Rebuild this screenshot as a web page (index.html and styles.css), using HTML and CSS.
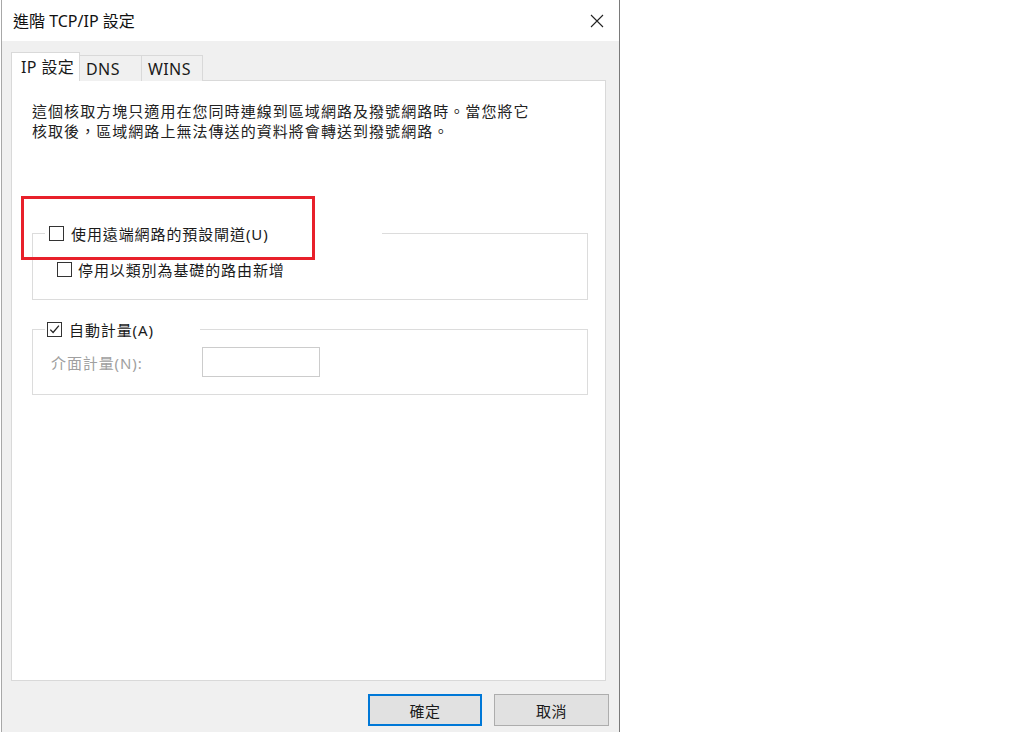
FILE: index.html
```html
<!DOCTYPE html>
<html lang="zh-Hant">
<head>
<meta charset="utf-8">
<title>進階 TCP/IP 設定</title>
<link rel="stylesheet" href="styles.css">
</head>
<body>
<div class="dialog">
  <div class="titlebar">
    <span class="title">進階 TCP/IP 設定</span>
    <svg class="close" width="14" height="14" viewBox="0 0 14 14"><path d="M1 1 L13 13 M13 1 L1 13" stroke="#222" stroke-width="1.1" fill="none"/></svg>
  </div>
  <div class="body">
    <div class="tabs">
      <div class="tab active">IP 設定</div>
      <div class="tab">DNS</div>
      <div class="tab">WINS</div>
    </div>
    <div class="panel">
      <p class="desc">這個核取方塊只適用在您同時連線到區域網路及撥號網路時。當您將它<br>核取後，區域網路上無法傳送的資料將會轉送到撥號網路。</p>
      <div class="group g1">
        <div class="group-title t1"><span class="cb"></span><span>使用遠端網路的預設閘道(U)</span></div>
        <div class="row r1"><span class="cb"></span><span>停用以類別為基礎的路由新增</span></div>
      </div>
      <div class="group g2">
        <div class="group-title t2"><span class="cb checked"><svg width="11" height="11" viewBox="0 0 11 11"><path d="M1.3 5.6 L4.1 8.5 L9.9 1.6" stroke="#222" stroke-width="1.3" fill="none"/></svg></span><span>自動計量(A)</span></div>
        <div class="row r2"><span class="disabled">介面計量(N):</span><span class="input"></span></div>
      </div>
      <div class="highlight"></div>
    </div>
    <div class="buttons">
      <button class="btn default">確定</button>
      <button class="btn">取消</button>
    </div>
  </div>
</div>
</body>
</html>
```
FILE: styles.css
```css
* { box-sizing: border-box; }
html, body { margin: 0; padding: 0; background: #ffffff; }
body {
  font-family: "Noto Sans", "Noto Sans CJK TC", sans-serif;
  color: #1a1a1a;
  height: 732px;
  overflow: hidden;
}
.dialog {
  width: 619px;
  height: 732px;
  margin-left: 1px;
  border-left: 1px solid #a8a8a8;
  border-right: 1px solid #7a7a7a;
  display: flex;
  flex-direction: column;
}
.titlebar {
  height: 41px;
  background: #ffffff;
  display: flex;
  align-items: center;
  justify-content: space-between;
  padding: 0 15px 2px 11px;
}
.title { font-size: 16px; color: #111; }
.close { display: block; margin-top: 2px; }
.body {
  flex: 1;
  background: #f0f0f0;
  padding: 11px 10px 0 9px;
  display: flex;
  flex-direction: column;
}
.tabs {
  display: flex;
  align-items: flex-end;
  height: 29px;
  margin-bottom: -1px;
  position: relative;
  z-index: 1;
}
.tab {
  height: 26px;
  border: 1px solid #d9d9d9;
  border-bottom: none;
  border-left: none;
  background: #f0f0f0;
  font-size: 16px;
  letter-spacing: 0.4px;
  display: flex;
  align-items: center;
  color: #1a1a1a;
}
.tab:nth-child(2) { width: 62px; padding-left: 6px; }
.tab:nth-child(3) { width: 61px; padding-left: 6px; }
.tab.active {
  height: 29px;
  width: 69px;
  background: #ffffff;
  border-left: 1px solid #d9d9d9;
  padding-left: 9px;
  padding-bottom: 2px;
}
.panel {
  position: relative;
  width: 595px;
  height: 601px;
  background: #ffffff;
  border: 1px solid #d9d9d9;
  padding: 20px 17px 0 20px;
}
.desc {
  margin: 0;
  font-size: 15px;
  line-height: 20px;
  letter-spacing: 1.05px;
  color: #222;
}
.group {
  border: 1px solid #dcdcdc;
  width: 556px;
  margin-left: 0;
}
.g1 { margin-top: 92px; height: 67px; }
.g2 { margin-top: 29px; height: 66px; }
.group-title {
  display: flex;
  align-items: center;
  gap: 7px;
  height: 20px;
  margin-top: -11px;
  background: #ffffff;
  font-size: 15px;
  letter-spacing: 0.9px;
  color: #1a1a1a;
}
.t1 { margin-left: 12px; width: 337px; padding-left: 4px; }
.t2 { margin-left: 12px; width: 155px; padding-left: 2px; }
.cb {
  width: 15px;
  height: 15px;
  border: 1px solid #333;
  background: #fff;
  flex: none;
  display: flex;
  align-items: center;
  justify-content: center;
}
.row {
  display: flex;
  align-items: center;
  font-size: 15px;
  letter-spacing: 0.9px;
}
.r1 { margin-top: 16px; height: 20px; padding-left: 24px; gap: 6px; }
.r2 { margin-top: 8px; height: 30px; padding-left: 18px; }
.disabled { color: #a0a0a0; width: 151px; }
.input {
  width: 118px;
  height: 30px;
  border: 1px solid #cccccc;
  background: #fff;
}
.highlight {
  position: absolute;
  left: 9px;
  top: 115px;
  width: 294px;
  height: 64px;
  border: 3px solid #e8202a;
}
.buttons {
  display: flex;
  justify-content: flex-end;
  gap: 12px;
  margin-top: 13px;
}
.btn {
  width: 115px;
  height: 32px;
  background: #e1e1e1;
  border: 1px solid #adadad;
  font-family: "Noto Sans", "Noto Sans CJK TC", sans-serif;
  font-size: 15px;
  letter-spacing: 0.5px;
  color: #1a1a1a;
  padding: 0;
}
.btn.default {
  width: 114px;
  border: 2px solid #0078d7;
}
```
